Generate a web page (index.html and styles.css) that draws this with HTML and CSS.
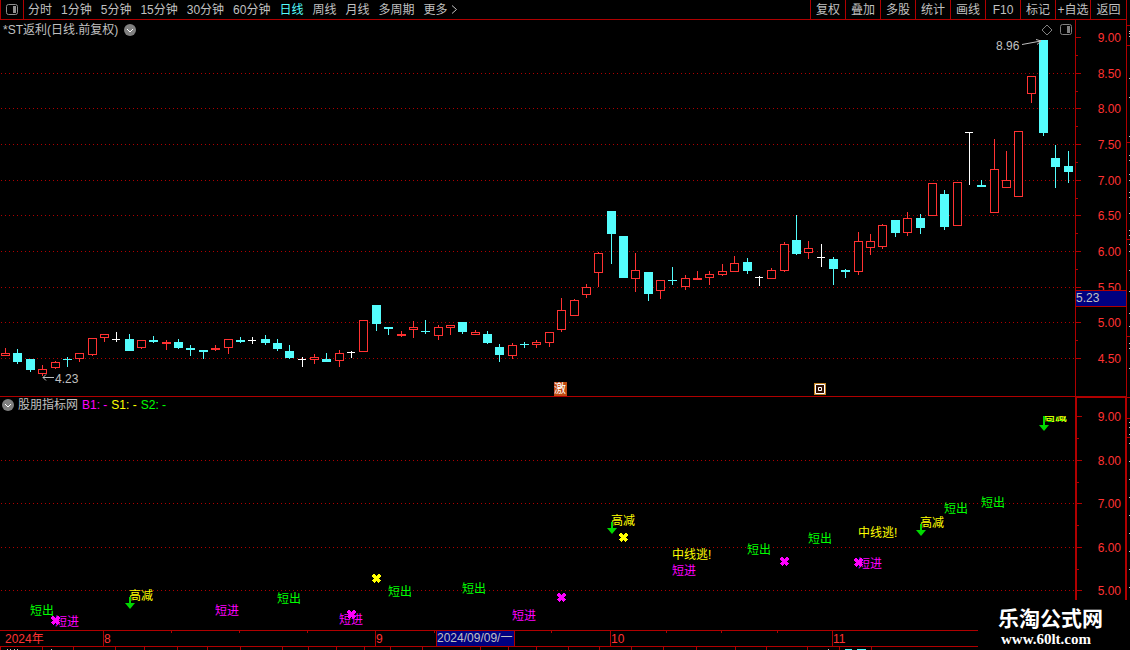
FILE: index.html
```
<!DOCTYPE html>
<html lang="zh-CN">

    <head>
        <meta charset="UTF-8">
        <meta name="viewport" content="width=device-width, initial-scale=1.0">
        <title>*ST返利 日线</title>

        <link rel="stylesheet" href="styles.css">
    </head>

    <body>
        <div class="main">
            <div class="toolbar">
                <button class="layout" aria-label="布局">
                    <svg width="12" height="11" viewBox="0 0 12 11">
                        <rect x="0.5" y="0.5" width="11" height="10" rx="2" fill="none" stroke="#909090"/>
                        <rect x="7" y="2" width="3" height="7" fill="#909090"/>
                    </svg>
                </button>
                <div class="periods">
                    <button>分时</button>
                    <button>1分钟</button>
                    <button>5分钟</button>
                    <button>15分钟</button>
                    <button>30分钟</button>
                    <button>60分钟</button>
                    <button class="active">日线</button>
                    <button>周线</button>
                    <button>月线</button>
                    <button>多周期</button>
                    <button class="more">更多
                        <svg width="7" height="9" viewBox="0 0 7 9"><path d="M1 0.5L5.5 4.5L1 8.5" fill="none" stroke="#c0c0c0"/></svg>
                    </button>
                </div>
                <div class="tools">
                    <button>复权</button>
                    <button>叠加</button>
                    <button>多股</button>
                    <button>统计</button>
                    <button>画线</button>
                    <button>F10</button>
                    <button>标记</button>
                    <button>+自选</button>
                    <button>返回</button>
                </div>
            </div>

            <div class="pane price">
                <div class="plot">
                    <div class="title">
                        <span>*ST返利(日线.前复权)</span>
                        <svg class="circle" width="12" height="12" viewBox="0 0 12 12">
                            <circle cx="6" cy="6" r="6" fill="#808080"/>
                            <path d="M3 5L6 8L9 5" fill="none" stroke="#fff"/>
                        </svg>
                        <svg class="window" width="31" height="12" viewBox="0 0 31 12">
                            <path d="M6 1L11 6L6 11L1 6Z" fill="none" stroke="#808080"/>
                            <rect x="19.5" y="0.5" width="11" height="10" rx="2" fill="none" stroke="#808080"/>
                            <rect x="26" y="2" width="3" height="7" fill="#808080"/>
                        </svg>
                    </div>
                    <svg class="canvas" height="356"><g id="candles" transform="translate(0,-40)"></g></svg>
                </div>
                <svg class="axis" width="51" height="376"><g id="priceAxis" transform="translate(0,-20)"></g></svg>
            </div>

            <div class="pane signal">
                <div class="plot">
                    <div class="title">
                        <svg class="circle" width="12" height="12" viewBox="0 0 12 12">
                            <circle cx="6" cy="6" r="6" fill="#808080"/>
                            <path d="M3 5L6 8L9 5" fill="none" stroke="#fff"/>
                        </svg>
                        <span>股朋指标网</span>
                        <span class="magenta">B1: -</span>
                        <span class="yellow">S1: -</span>
                        <span class="green">S2: -</span>
                    </div>
                    <svg class="canvas" height="217"><g id="signals" transform="translate(0,-413)"></g></svg>
                </div>
                <svg class="axis" width="51" height="233"><g id="signalAxis" transform="translate(0,-397)"></g></svg>
            </div>

            <svg class="timeline" height="20"><g id="dates"></g></svg>
        </div>

        <svg class="side" width="4" height="650"><g id="side"></g></svg>

        <div class="logo">
            <div class="name">乐淘公式网</div>
            <div class="url">www.60lt.com</div>
        </div>

        <script src="script.js"></script>
    </body>

</html>
```
FILE: styles.css
```
* {
    margin: 0;
    padding: 0;
    box-sizing: border-box;
}

body {
    position: relative;
    display: flex;
    min-height: 100vh;
    overflow: hidden;

    background-color: black;
    color: #c0c0c0;
    font-family: "Liberation Sans", "Noto Sans CJK SC", sans-serif;
    font-size: 12px;
    line-height: 18px;
}

svg {
    display: block;
    flex: none;
}

button {
    background: none;
    border: none;
    color: inherit;
    font: inherit;
    white-space: nowrap;
}

.main {
    flex: 1;
    min-width: 0;
}

.toolbar {
    display: flex;
    height: 20px;
    border-bottom: 1px solid #b00000;
}

.layout {
    display: flex;
    justify-content: center;
    align-items: center;
    width: 24px;
    border-left: 1px solid #b00000;
    border-right: 1px solid #b00000;
}

.periods {
    display: flex;
    flex: 1;
    gap: 9px;
    padding-left: 4px;
}

.periods .active {
    color: #54fcfc;
}

.more {
    display: flex;
    align-items: center;
    gap: 3px;
}

.tools {
    display: flex;
}

.tools button {
    width: 35px;
    border-left: 1px solid #b00000;
}

.tools button:last-child {
    width: 36px;
}

.pane {
    display: flex;
}

.price {
    border-bottom: 1px solid #b00000;
}

.plot {
    flex: 1;
    min-width: 0;
}

.title {
    display: flex;
    align-items: center;
    gap: 6px;
    height: 20px;
    padding-left: 3px;
}

.window {
    margin-left: auto;
    margin-right: 3px;
}

.signal .title {
    height: 16px;
    padding-left: 2px;
    gap: 4px;
}

.canvas {
    width: 100%;
    overflow: visible;
}

.axis {
    overflow: visible;
}

.timeline {
    width: 100%;
}

.magenta {
    color: #ff00ff;
}

.yellow {
    color: #ffff00;
}

.green {
    color: #00ff00;
}

.side {
    border-left: 1px solid #b00000;
}

.logo {
    position: absolute;
    right: 0;
    bottom: 0;
    width: 152px;
    height: 50px;
    padding: 6px 0 0 20px;
    background-color: black;
    color: white;
    font-weight: bold;
}

.name {
    font-size: 21px;
    line-height: 25px;
}

.url {
    padding-left: 3px;
    font-family: "Liberation Serif", serif;
    font-size: 15px;
    line-height: 17px;
}
```
FILE: script.js
```
const RED = "#ff3232";
const CYAN = "#54fcfc";
const LINE = "#b00000";
const colors = { r: RED, f: RED, c: CYAN, w: "#ffffff" };

// high, top, bottom, low, kind (r hollow, f filled red, c cyan, w white)
const candles = [
    [348, 353, 356, 356, "r"], [349, 353, 362, 364, "c"], [359, 359, 370, 372, "c"], [365, 369, 374, 376, "r"],
    [361, 362, 368, 369, "r"], [357, 359, 360, 367, "c"], [353, 353, 359, 362, "r"], [338, 338, 355, 356, "r"],
    [334, 334, 338, 342, "r"], [332, 339, 340, 342, "w"], [334, 339, 351, 351, "c"], [340, 340, 348, 349, "r"],
    [336, 340, 342, 343, "c"], [340, 342, 344, 350, "f"], [339, 342, 348, 349, "c"], [345, 348, 350, 356, "c"],
    [350, 350, 352, 359, "c"], [345, 348, 350, 351, "f"], [339, 339, 348, 354, "r"], [337, 340, 342, 343, "c"],
    [337, 340, 341, 344, "w"], [335, 339, 343, 345, "c"], [339, 343, 349, 351, "c"], [345, 351, 358, 359, "c"],
    [357, 359, 360, 367, "w"], [354, 357, 360, 364, "r"], [353, 359, 362, 362, "c"], [350, 353, 361, 367, "r"],
    [351, 352, 353, 358, "w"], [320, 320, 352, 352, "r"], [305, 305, 324, 331, "c"], [327, 327, 329, 335, "c"],
    [331, 334, 336, 337, "f"], [321, 327, 330, 338, "r"], [320, 331, 332, 334, "c"], [325, 327, 336, 340, "r"],
    [325, 325, 328, 335, "r"], [322, 322, 332, 334, "c"], [330, 332, 335, 335, "r"], [331, 334, 343, 344, "c"],
    [344, 347, 355, 362, "c"], [343, 345, 356, 359, "r"], [342, 344, 345, 348, "c"], [340, 342, 345, 348, "r"],
    [332, 332, 343, 347, "r"], [298, 310, 330, 332, "r"], [299, 300, 316, 316, "r"], [284, 287, 295, 298, "r"],
    [252, 253, 273, 287, "r"], [211, 211, 234, 264, "c"], [236, 236, 278, 278, "c"], [253, 270, 279, 292, "r"],
    [272, 272, 294, 301, "c"], [280, 280, 291, 299, "r"], [267, 280, 281, 285, "c"], [275, 278, 287, 290, "r"],
    [271, 278, 280, 280, "f"], [271, 274, 278, 285, "r"], [264, 271, 275, 276, "r"], [256, 263, 272, 272, "r"],
    [258, 262, 271, 274, "c"], [276, 277, 278, 286, "w"], [268, 270, 279, 279, "r"], [242, 244, 271, 272, "r"],
    [215, 240, 254, 255, "c"], [241, 248, 253, 259, "r"], [244, 257, 258, 267, "w"], [257, 259, 269, 285, "c"],
    [269, 270, 272, 278, "c"], [232, 241, 272, 275, "r"], [234, 241, 248, 255, "r"], [224, 225, 247, 249, "r"],
    [220, 220, 233, 237, "c"], [212, 218, 233, 236, "r"], [214, 218, 228, 234, "c"], [183, 183, 216, 216, "r"],
    [190, 194, 227, 230, "c"], [182, 182, 226, 226, "r"], [132, 132, 133, 185, "w"], [180, 185, 187, 187, "c"],
    [139, 169, 213, 213, "r"], [151, 180, 188, 188, "r"], [131, 131, 197, 197, "r"], [76, 76, 94, 103, "r"],
    [40, 40, 133, 136, "c"], [145, 158, 167, 188, "c"], [151, 166, 172, 183, "c"]
];

const priceTicks = [
    [37, "9.00"], [73, "8.50"], [108, "8.00"], [144, "7.50"], [180, "7.00"],
    [215, "6.50"], [251, "6.00"], [287, "5.50"], [322, "5.00"], [358, "4.50"]
];

const signalTicks = [[416, "9.00"], [460, "8.00"], [503, "7.00"], [547, "6.00"], [590, "5.00"]];

const labels = [
    [30, 615, "短出"], [55, 626, "短进"], [129, 600, "高减"], [215, 615, "短进"], [277, 603, "短出"],
    [339, 624, "短进"], [388, 596, "短出"], [462, 593, "短出"], [512, 620, "短进"], [611, 525, "高减"],
    [672, 559, "中线逃!"], [672, 575, "短进"], [747, 554, "短出"], [808, 543, "短出"], [858, 537, "中线逃!"],
    [858, 568, "短进"], [920, 527, "高减"], [944, 513, "短出"], [981, 507, "短出"]
];
const labelColors = { "短出": "#00ff00", "短进": "#ff00ff", "高减": "#ffff00", "中线逃!": "#ffff00" };

const crosses = [
    [51, 616, "#ff00ff"], [347, 610, "#ff00ff"], [372, 574, "#ffff00"], [619, 533, "#ffff00"],
    [557, 593, "#ff00ff"], [780, 557, "#ff00ff"], [854, 558, "#ff00ff"]
];

const arrows = [[129, 597, 603], [611, 522, 528], [920, 524, 530], [1043, 416, 425]];

function draw(parent, tag, attrs, text) {
    const el = document.createElementNS("http://www.w3.org/2000/svg", tag);
    for (const key in attrs) {
        el.setAttribute(key, attrs[key]);
    }
    if (text) {
        el.textContent = text;
    }
    parent.appendChild(el);
    return el;
}

function rect(parent, x, y, width, height, fill) {
    return draw(parent, "rect", { x, y, width, height, fill });
}

function text(parent, x, y, fill, value) {
    return draw(parent, "text", { x, y, fill }, value);
}

function grid(parent, ticks) {
    ticks.slice(1).forEach(([y]) => {
        draw(parent, "line", {
            x1: 1, y1: y + 0.5, x2: "100%", y2: y + 0.5,
            stroke: LINE, "stroke-dasharray": "1 3"
        });
    });
}

function axis(parent, ticks, left) {
    ticks.forEach(([y, value], i) => {
        rect(parent, left, y, 5, 1, LINE);
        if (i < ticks.length - 1) {
            rect(parent, left, Math.round((y + ticks[i + 1][0]) / 2), 2, 1, LINE);
        }
        const label = text(parent, 46, y + 5, RED, value);
        label.setAttribute("text-anchor", "end");
    });
}

// price pane
const price = document.getElementById("candles");
grid(price, priceTicks);
candles.forEach(([high, top, bottom, low, kind], i) => {
    const x = Math.floor(5.64 + 12.357 * i);
    const color = colors[kind];
    if (kind == "r") {
        rect(price, x, high, 1, top - high, color);
        rect(price, x, bottom, 1, low - bottom, color);
        draw(price, "rect", {
            x: x - 3.5, y: top + 0.5, width: 8, height: bottom - top - 1,
            fill: "#000", stroke: color
        });
    } else {
        rect(price, x, high, 1, low - high, color);
        rect(price, x - 4, top, kind == "w" ? 8 : 9, bottom - top, color);
    }
});
text(price, 996, 50, "#c0c0c0", "8.96");
draw(price, "path", { d: "M1022 44.5L1041 41M1036 39.5L1041 41L1037 44.5", fill: "none", stroke: "#c0c0c0" });
text(price, 55, 383, "#c0c0c0", "4.23");
draw(price, "path", { d: "M54 377.5H43M46 374.5L43 377.5L46 380.5", fill: "none", stroke: "#c0c0c0" });

rect(price, 554, 382, 13, 14, "#c04a10");
text(price, 554, 393, "#fff", "激");
rect(price, 814, 383, 12, 12, "#c08020");
draw(price, "path", { d: "M815.5 384.5H824.5V393.5H815.5ZM818.5 387.5H821.5V390.5H818.5Z", fill: "#301000", stroke: "#fff" });

const priceAxis = document.getElementById("priceAxis");
rect(priceAxis, 0, 20, 1, 376, LINE);
axis(priceAxis, priceTicks, 1);
rect(priceAxis, 0, 290, 51, 17, LINE);
rect(priceAxis, 1, 291, 50, 15, "#000080");
text(priceAxis, 1, 302, "#c0c0c0", "5.23");

// indicator pane
const signals = document.getElementById("signals");
grid(signals, signalTicks);
labels.forEach(([x, y, value]) => text(signals, x, y, labelColors[value], value));
crosses.forEach(([x, y, stroke]) => {
    draw(signals, "path", {
        d: `M${x + 1} ${y + 1}L${x + 8} ${y + 8}M${x + 8} ${y + 1}L${x + 1} ${y + 8}`,
        stroke, "stroke-width": 3, "shape-rendering": "crispEdges"
    });
});
const clip = draw(signals, "clipPath", { id: "top" });
rect(clip, 1040, 416, 40, 10, "#fff");
const last = draw(signals, "g", { "clip-path": "url(#top)" });
text(last, 1043, 421, "#00ff00", "短出");
text(last, 1043, 421, "#ffff00", "高减");
arrows.forEach(([x, top, head]) => {
    rect(signals, x, top, 2, head - top, "#00d800");
    draw(signals, "path", { d: `M${x - 4} ${head}H${x + 6}L${x + 1} ${head + 6}Z`, fill: "#00d800" });
});

const signalAxis = document.getElementById("signalAxis");
rect(signalAxis, 0, 396, 2, 234, LINE);
rect(signalAxis, 0, 396, 52, 2, LINE);
rect(signalAxis, 50, 396, 2, 234, LINE);
axis(signalAxis, signalTicks, 2);

// dates
const dates = document.getElementById("dates");
rect(dates, 0, 0, "100%", 1, LINE);
rect(dates, 0, 16, "100%", 1, LINE);
[103, 375, 610, 832].forEach(x => rect(dates, x, 0, 1, 17, LINE));
[171, 239, 307, 434, 551, 666, 721, 777].forEach(x => rect(dates, x, 1, 1, 2, LINE));
text(dates, 5, 13, RED, "2024年");
text(dates, 104, 13, RED, "8");
text(dates, 376, 13, RED, "9");
text(dates, 611, 13, RED, "10");
text(dates, 833, 13, RED, "11");
rect(dates, 436, 0, 79, 17, LINE);
rect(dates, 437, 1, 77, 15, "#000080");
text(dates, 437, 12, "#c0c0c0", "2024/09/09/一");
[0, 42, 73, 115, 144, 177, 207, 240, 282, 308, 336, 364, 390, 422, 480, 508, 536, 568, 599, 631, 663, 696, 735, 766, 807, 839, 871]
    .forEach(x => rect(dates, x, 17, 1, 3, LINE));
[7, 10, 14, 17, 51, 828].forEach(x => rect(dates, x, 19, 1, 1, "#c0c0c0"));
rect(dates, 845, 19, 7, 1, CYAN);
rect(dates, 857, 19, 9, 1, CYAN);

// right edge
const side = document.getElementById("side");
[25, 45, 142, 239, 336, 397, 418, 437].forEach(y => rect(side, 0, y, 3, 1, LINE));
[31, 33, 36, 78, 97, 136, 155, 160, 174, 180, 192, 197, 213, 230, 235, 244, 251, 270, 291, 313, 326, 343, 348, 368,
    422, 427, 434, 443, 461, 479, 497, 515, 533, 551, 569, 587].forEach(y => rect(side, 2, y, 1, 1, "#c0c0c0"));
```
